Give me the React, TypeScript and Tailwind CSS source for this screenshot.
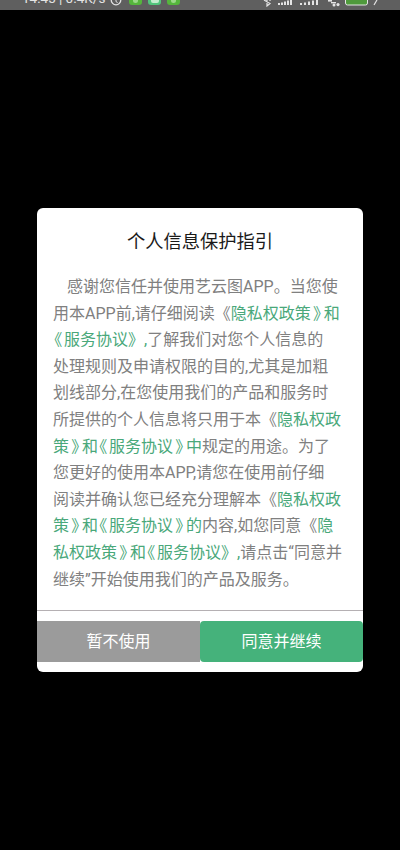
import React from 'react';

const lines: { text: string; green?: boolean }[][] = [
  [{ text: '感谢您信任并使用艺云图APP。当您使' }],
  [{ text: '用本APP前,请仔细阅读《' }, { text: '隐私权政策》和', green: true }],
  [{ text: '《服务协议》,', green: true }, { text: '了解我们对您个人信息的' }],
  [{ text: '处理规则及申请权限的目的,尤其是加粗' }],
  [{ text: '划线部分,在您使用我们的产品和服务时' }],
  [{ text: '所提供的个人信息将只用于本《' }, { text: '隐私权政', green: true }],
  [{ text: '策》和《服务协议》中', green: true }, { text: '规定的用途。为了' }],
  [{ text: '您更好的使用本APP,请您在使用前仔细' }],
  [{ text: '阅读并确认您已经充分理解本《' }, { text: '隐私权政', green: true }],
  [{ text: '策》和《服务协议》的', green: true }, { text: '内容,如您同意《' }, { text: '隐', green: true }],
  [{ text: '私权政策》和《服务协议》,', green: true }, { text: '请点击“同意并' }],
  [{ text: '继续”开始使用我们的产品及服务。' }],
];

// inside the green runs the book-title marks sit tighter, except 》 before a comma
const Tight: React.FC<{ text: string }> = ({ text }) => (
  <>
    {text.split(/(《|》(?!,))/).map((s, i) =>
      s === '《' ? (
        <span key={i} className="pl-[1px] pr-[2px] [font-feature-settings:'palt']">{s}</span>
      ) : s === '》' ? (
        <span key={i} className="px-[2.5px] [font-feature-settings:'palt']">{s}</span>
      ) : (
        s
      ),
    )}
  </>
);

const AppIcon: React.FC<{ light?: boolean }> = ({ light }) => (
  <div className={`w-[13px] h-[5px] rounded-b-[3px] flex justify-center ${light ? 'bg-[#52c47c]' : 'bg-[#55b53c]'}`}>
    <div className={light ? 'w-[8px] h-[3px] rounded-b-[2px] bg-[#c4eccf]' : 'w-[5px] h-[3px] rounded-b-full bg-[#9bd889]'} />
  </div>
);

const StatusBar: React.FC = () => (
  <div className="h-[10px] bg-[#5f5f5f] overflow-hidden flex items-start justify-between pl-[22px] pr-[21px]">
    <div className="flex items-start">
      <span className="mt-[-9px] text-[13.5px] leading-[14px] text-[#e4e4e4] whitespace-nowrap">14:45 | 0.4K/s</span>
      <svg width="12" height="6" viewBox="0 0 12 6" className="ml-[5px]">
        <circle cx="6" cy="0" r="4.8" fill="none" stroke="#e4e4e4" strokeWidth="1.3" />
        <path d="M6 0v1.6l1.6 1" fill="none" stroke="#e4e4e4" strokeWidth="1" />
      </svg>
      <div className="flex gap-[6px] ml-[7px]">
        <AppIcon />
        <AppIcon light />
        <AppIcon />
      </div>
    </div>
    <svg width="116" height="7" viewBox="0 0 116 7">
      <path d="M1 0l6 3.5L4 6V0M7 0v1" fill="none" stroke="#e4e4e4" strokeWidth="1.2" />
      <g fill="#e4e4e4">
        <rect x="15" y="3" width="2" height="2" /><rect x="18" y="2.5" width="2" height="2.5" /><rect x="21" y="1.5" width="2" height="3.5" /><rect x="24" y="0.5" width="2" height="4.5" /><rect x="27" y="0" width="2" height="5" />
        <rect x="37" y="3" width="2" height="2" /><rect x="41" y="2.5" width="2" height="2.5" /><rect x="45" y="1.5" width="2" height="3.5" /><rect x="49" y="0.5" width="2" height="4.5" /><rect x="53" y="0" width="2" height="5" />
        <rect x="65" y="0" width="4" height="1.6" /><rect x="68" y="2" width="5" height="1.4" /><circle cx="71" cy="5" r="1.5" /><circle cx="75" cy="4.6" r="1.6" />
      </g>
      <rect x="82.5" y="-3" width="22" height="8" rx="2" fill="#4f9a3c" stroke="#e4e4e4" />
      <path d="M111 5l3-5" stroke="#e4e4e4" strokeWidth="1.2" />
    </svg>
  </div>
);

export default function App() {
  return (
    <div className="w-[400px] h-[850px] bg-black flex flex-col overflow-hidden font-['Roboto','Noto_Sans_CJK_SC',sans-serif]">
      <StatusBar />
      <div className="mt-[198px] mx-[37px] h-[464px] bg-white rounded-[6px] flex flex-col">
        <h1 className="mt-[20px] text-center text-[18.3px] leading-[28px] font-normal text-[#1a1a1a]">个人信息保护指引</h1>
        <div className="mt-[18px] pl-[16px] text-[16px] leading-[26.6px] text-[#808080]">
          {lines.map((line, i) => (
            <div key={i} className={i === 0 ? 'whitespace-nowrap pl-[14px]' : 'whitespace-nowrap'}>
              {line.map((part, j) =>
                part.green ? (
                  <span key={j} className="text-[#49a87a]">
                    <Tight text={part.text} />
                  </span>
                ) : (
                  <span key={j}>{part.text}</span>
                ),
              )}
            </div>
          ))}
        </div>
        <div className="mt-[17px] h-px bg-[#b5b0b3]" />
        <div className="mt-[10px] h-[41px] flex">
          <button className="w-1/2 bg-[#9b9b9b] text-white text-[16px]">暂不使用</button>
          <button className="w-1/2 bg-[#45b27b] text-white text-[16px] rounded-[4px]">同意并继续</button>
        </div>
      </div>
    </div>
  );
}
